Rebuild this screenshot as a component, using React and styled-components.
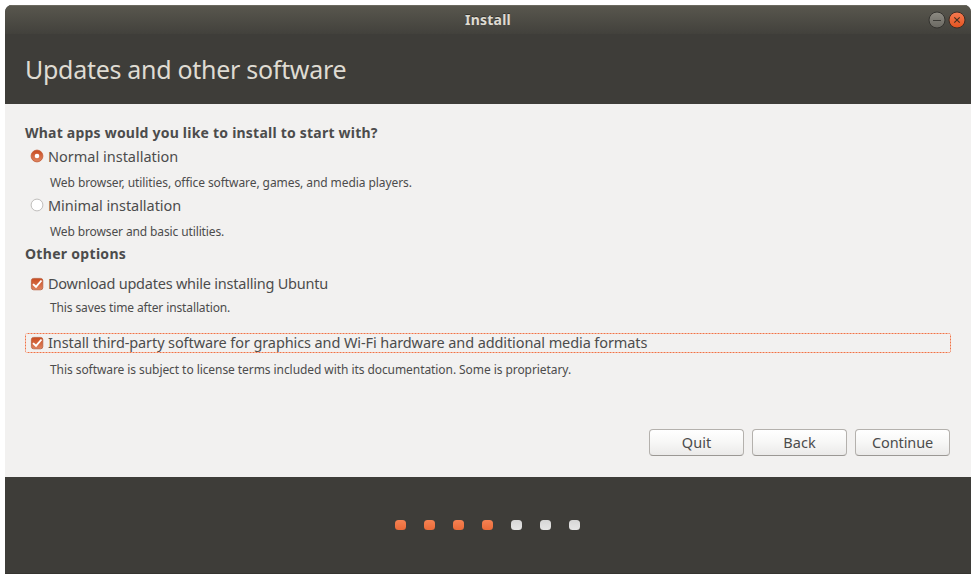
import React from "react";
import styled, { createGlobalStyle } from "styled-components";

const GlobalStyle = createGlobalStyle`
  * { box-sizing: border-box; }
  body { margin: 0; background: #fff; font-family: "Noto Sans", "Open Sans", sans-serif; }
`;

const Page = styled.div`
  width: 980px;
  height: 583px;
  padding: 5px 9px 9px 5px;
`;

const Window = styled.main`
  display: flex;
  flex-direction: column;
  width: 966px;
  height: 569px;
  overflow: hidden;
  border-radius: 7px 7px 0 0;
  background: #3e3d39;
`;

const TitleBar = styled.header`
  display: grid;
  grid-template-columns: 1fr auto 1fr;
  align-items: center;
  flex: 0 0 29px;
  padding-right: 5px;
  background: linear-gradient(#59574e, #42413c);
  box-shadow: inset 0 1px #6b695f;
`;

const WindowTitle = styled.div`
  grid-column: 2;
  padding-left: 5px;
  color: #dfdbd2;
  font-size: 14px;
  font-weight: 700;
  line-height: 20px;
  letter-spacing: ${(p) => p.$tracking || 0}px;
  text-shadow: 0 -1px #33322e;
`;

const WindowControls = styled.div`
  display: flex;
  justify-content: flex-end;
  gap: 2px;
`;

const ControlIcon = styled.svg`
  display: block;
  width: 18px;
  height: 18px;
`;

const Heading = styled.h1`
  flex: 0 0 70px;
  margin: 0;
  padding: 17px 0 0 20px;
  color: #dfdbd2;
  font-size: 25px;
  font-weight: 400;
  line-height: 36px;
  letter-spacing: ${(p) => p.$tracking || 0}px;
  white-space: nowrap;
`;

const Content = styled.section`
  display: flex;
  flex-direction: column;
  flex: 0 0 373px;
  padding: 18px 21px 21px 20px;
  background: #f2f1f0;
  color: #4c4c4c;
`;

const SectionTitle = styled.h2`
  margin: ${(p) => p.$top || 0}px 0 0;
  height: 22px;
  font-size: 14px;
  font-weight: 700;
  line-height: 22px;
  letter-spacing: ${(p) => p.$tracking || 0}px;
  white-space: nowrap;
`;

const Option = styled.div`
  display: flex;
  align-items: center;
  gap: 4px;
  height: 20px;
  margin-top: ${(p) => p.$top}px;
  padding-left: 5px;
  font-size: 14.5px;
  line-height: 20px;
  letter-spacing: ${(p) => p.$tracking || 0}px;
  white-space: nowrap;
`;

const dotsAcross = "repeating-linear-gradient(90deg, #ec7348 0 1px, #f7b198 1px 3px)";
const dotsDown = "repeating-linear-gradient(180deg, #ec7348 0 1px, #f7b198 1px 3px)";

const FocusedOption = styled(Option)`
  margin-right: -1px;
  border-radius: 3px;
  background:
    ${dotsAcross} top / 100% 1px no-repeat,
    ${dotsAcross} bottom / 100% 1px no-repeat,
    ${dotsDown} left / 1px 100% no-repeat,
    ${dotsDown} right / 1px 100% no-repeat;
`;

const OptionLabel = styled.span`
  margin-top: ${(p) => (p.$raised ? -2 : 0)}px;
`;

const Hint = styled.p`
  height: 18px;
  margin: ${(p) => p.$top}px 0 0 25px;
  font-size: 12px;
  line-height: 18px;
  letter-spacing: ${(p) => p.$tracking || 0}px;
  white-space: nowrap;
`;

const Mark = styled.svg`
  flex: none;
  width: 14px;
  height: 14px;
`;

const Actions = styled.div`
  display: flex;
  justify-content: flex-end;
  gap: 8px;
  margin-top: auto;
`;

const Button = styled.button`
  width: 95px;
  height: 27px;
  padding: 0;
  border: 1px solid #b4b1ad;
  border-bottom-color: #9b9894;
  border-radius: 4px;
  background: linear-gradient(#ffffff, #f7f7f6 50%, #ebeae9);
  color: #4c4c4c;
  font: 400 14.5px/23px "Noto Sans", sans-serif;
  letter-spacing: ${(p) => p.$tracking || 0}px;
`;

const Footer = styled.footer`
  display: flex;
  justify-content: center;
  flex: 1;
  gap: 18px;
  padding: 43px 1px 0 0;
  box-shadow: inset 0 -1px #353430;
`;

const Step = styled.span`
  width: 11px;
  height: 10px;
  border-radius: 3.5px;
  background: ${(p) => (p.$done ? "linear-gradient(#f58253, #ea6a38)" : "linear-gradient(#d6d6d6, #e6e6e6)")};
`;

function Radio({ checked }) {
  return (
    <Mark viewBox="0 0 14 14">
      <defs>
        <linearGradient id="radioFill" x2="0" y2="1">
          <stop stopColor="#c84b20" />
          <stop offset="1" stopColor="#e08763" />
        </linearGradient>
      </defs>
      <circle cx="7" cy="7" r="5.9" fill={checked ? "url(#radioFill)" : "#fff"} stroke={checked ? "#c6633e" : "#b9b7b4"} strokeWidth=".9" />
      {checked && <circle cx="7" cy="7" r="2.3" fill="#fff" />}
    </Mark>
  );
}

function Check() {
  return (
    <Mark viewBox="0 0 14 14">
      <defs>
        <linearGradient id="checkFill" x2="0" y2="1">
          <stop stopColor="#c94c20" />
          <stop offset="1" stopColor="#df8460" />
        </linearGradient>
      </defs>
      <rect x="1.4" y="1.4" width="11.4" height="11.4" rx="2.2" fill="url(#checkFill)" stroke="#b9603f" strokeWidth=".8" />
      <path d="M3 7.1 6 9.8 11.5 3.5" fill="none" stroke="#fff" strokeWidth="1.9" />
    </Mark>
  );
}

function Minimize() {
  return (
    <ControlIcon viewBox="0 0 18 18">
      <defs>
        <linearGradient id="minFill" x2="0" y2="1">
          <stop stopColor="#8d8b83" />
          <stop offset="1" stopColor="#6a6861" />
        </linearGradient>
      </defs>
      <circle cx="9" cy="9" r="8" fill="url(#minFill)" stroke="#34332f" />
      <path d="M5 9.5h8" stroke="#3b3a35" />
    </ControlIcon>
  );
}

function Close() {
  return (
    <ControlIcon viewBox="0 0 18 18">
      <defs>
        <linearGradient id="closeFill" x2="0" y2="1">
          <stop stopColor="#f67b52" />
          <stop offset="1" stopColor="#e3531f" />
        </linearGradient>
      </defs>
      <circle cx="9" cy="9" r="8" fill="url(#closeFill)" stroke="#3c2d25" />
      <path d="m6.3 6.3 5.4 5.4m0-5.4-5.4 5.4" stroke="#46301f" strokeWidth="1.2" />
    </ControlIcon>
  );
}

export default function App() {
  return (
    <>
      <GlobalStyle />
      <Page>
        <Window>
          <TitleBar>
            <WindowTitle $tracking={0.2}>Install</WindowTitle>
            <WindowControls>
              <Minimize />
              <Close />
            </WindowControls>
          </TitleBar>
          <Heading $tracking={-0.29}>Updates and other software</Heading>
          <Content>
            <SectionTitle $tracking={0.22}>What apps would you like to install to start with?</SectionTitle>
            <Option $top={2}><Radio checked /><OptionLabel>Normal installation</OptionLabel></Option>
            <Hint $top={8} $tracking={-0.075}>Web browser, utilities, office software, games, and media players.</Hint>
            <Option $top={3} $tracking={-0.05}><Radio /><OptionLabel>Minimal installation</OptionLabel></Option>
            <Hint $top={8} $tracking={-0.12}>Web browser and basic utilities.</Hint>
            <SectionTitle $top={2} $tracking={0.3}>Other options</SectionTitle>
            <Option $top={9} $tracking={-0.23}><Check /><OptionLabel $raised>Download updates while installing Ubuntu</OptionLabel></Option>
            <Hint $top={5} $tracking={-0.12}>This saves time after installation.</Hint>
            <FocusedOption $top={16} $tracking={-0.1}><Check /><OptionLabel $raised>Install third-party software for graphics and Wi-Fi hardware and additional media formats</OptionLabel></FocusedOption>
            <Hint $top={8} $tracking={-0.07}>This software is subject to license terms included with its documentation. Some is proprietary.</Hint>
            <Actions>
              <Button>Quit</Button>
              <Button>Back</Button>
              <Button $tracking={-0.1}>Continue</Button>
            </Actions>
          </Content>
          <Footer>
            {[1, 2, 3, 4, 5, 6, 7].map((n) => (
              <Step key={n} $done={n < 5} />
            ))}
          </Footer>
        </Window>
      </Page>
    </>
  );
}
